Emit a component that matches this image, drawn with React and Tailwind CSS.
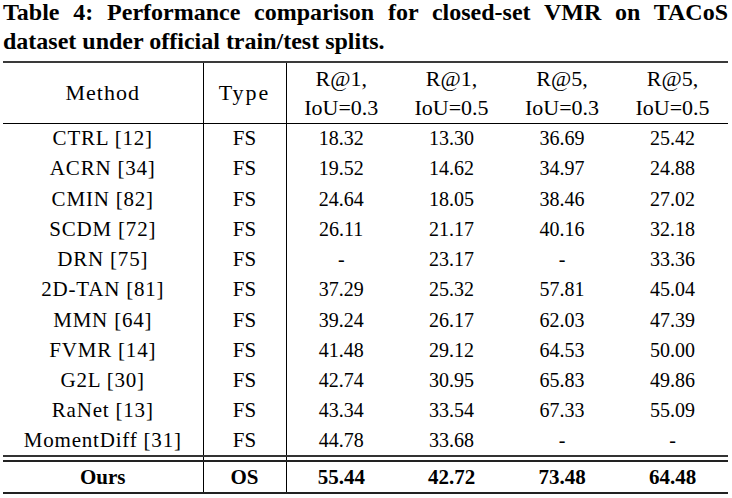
export default function App() {
  const rows = [
    ["CTRL [12]", "FS", "18.32", "13.30", "36.69", "25.42"],
    ["ACRN [34]", "FS", "19.52", "14.62", "34.97", "24.88"],
    ["CMIN [82]", "FS", "24.64", "18.05", "38.46", "27.02"],
    ["SCDM [72]", "FS", "26.11", "21.17", "40.16", "32.18"],
    ["DRN [75]", "FS", "-", "23.17", "-", "33.36"],
    ["2D-TAN [81]", "FS", "37.29", "25.32", "57.81", "45.04"],
    ["MMN [64]", "FS", "39.24", "26.17", "62.03", "47.39"],
    ["FVMR [14]", "FS", "41.48", "29.12", "64.53", "50.00"],
    ["G2L [30]", "FS", "42.74", "30.95", "65.83", "49.86"],
    ["RaNet [13]", "FS", "43.34", "33.54", "67.33", "55.09"],
    ["MomentDiff [31]", "FS", "44.78", "33.68", "-", "-"],
  ];
  const heads = [
    ["R@1,", "IoU=0.3"],
    ["R@1,", "IoU=0.5"],
    ["R@5,", "IoU=0.3"],
    ["R@5,", "IoU=0.5"],
  ];
  return (
    <div
      className="w-[732px] h-[498px] bg-white text-black overflow-hidden"
      style={{ fontFamily: '"Liberation Serif", "Times New Roman", serif' }}
    >
      <div className="pl-[3px] pr-[4px]">
        <p className="mt-[-2px] text-[24px] font-bold leading-[29px] text-justify [text-align-last:left]">
          Table 4: Performance comparison for closed-set VMR on TACoS dataset under official train/test splits.
        </p>
        <table className="mt-[5px] w-[725px] border-collapse table-fixed">
          <colgroup>
            <col className="w-[200px]" />
            <col className="w-[83px]" />
            <col className="w-[110px]" />
            <col className="w-[111px]" />
            <col className="w-[110px]" />
            <col className="w-[111px]" />
          </colgroup>
          <thead>
            <tr className="h-[61px] border-t-[2px] border-t-[#3a3a3a] border-b border-b-black text-[22px]">
              <th className="font-normal text-center border-r border-black p-0 tracking-[1px]">Method</th>
              <th className="font-normal text-center border-r border-black p-0 tracking-[2px]">Type</th>
              {heads.map((h, i) => (
                <th key={i} className="font-normal text-center leading-[29px] p-0">
                  <div>{h[0]}</div>
                  <div>{h[1]}</div>
                </th>
              ))}
            </tr>
          </thead>
          <tbody className="text-[20px] leading-[24px]">
            {rows.map((r, i) => (
              <tr key={i} className="h-[30.25px]">
                <td className="text-center border-r border-black p-0 text-[21px] tracking-[0.8px]">{r[0]}</td>
                <td className="text-center border-r border-black p-0 text-[21px]">{r[1]}</td>
                <td className="text-center p-0">{r[2]}</td>
                <td className="text-center p-0">{r[3]}</td>
                <td className="text-center p-0">{r[4]}</td>
                <td className="text-center p-0">{r[5]}</td>
              </tr>
            ))}
            <tr className="h-[5px] border-t-[2px] border-t-[#333] border-b-[2px] border-b-[#222]">
              <td className="border-r border-black p-0"></td>
              <td className="border-r border-black p-0"></td>
              <td colSpan={4} className="p-0"></td>
            </tr>
            <tr className="h-[32px] border-b-[2px] border-b-[#222] font-bold text-[21px]">
              <td className="text-center border-r border-black p-0">Ours</td>
              <td className="text-center border-r border-black p-0">OS</td>
              <td className="text-center p-0">55.44</td>
              <td className="text-center p-0">42.72</td>
              <td className="text-center p-0">73.48</td>
              <td className="text-center p-0">64.48</td>
            </tr>
          </tbody>
        </table>
      </div>
    </div>
  );
}
